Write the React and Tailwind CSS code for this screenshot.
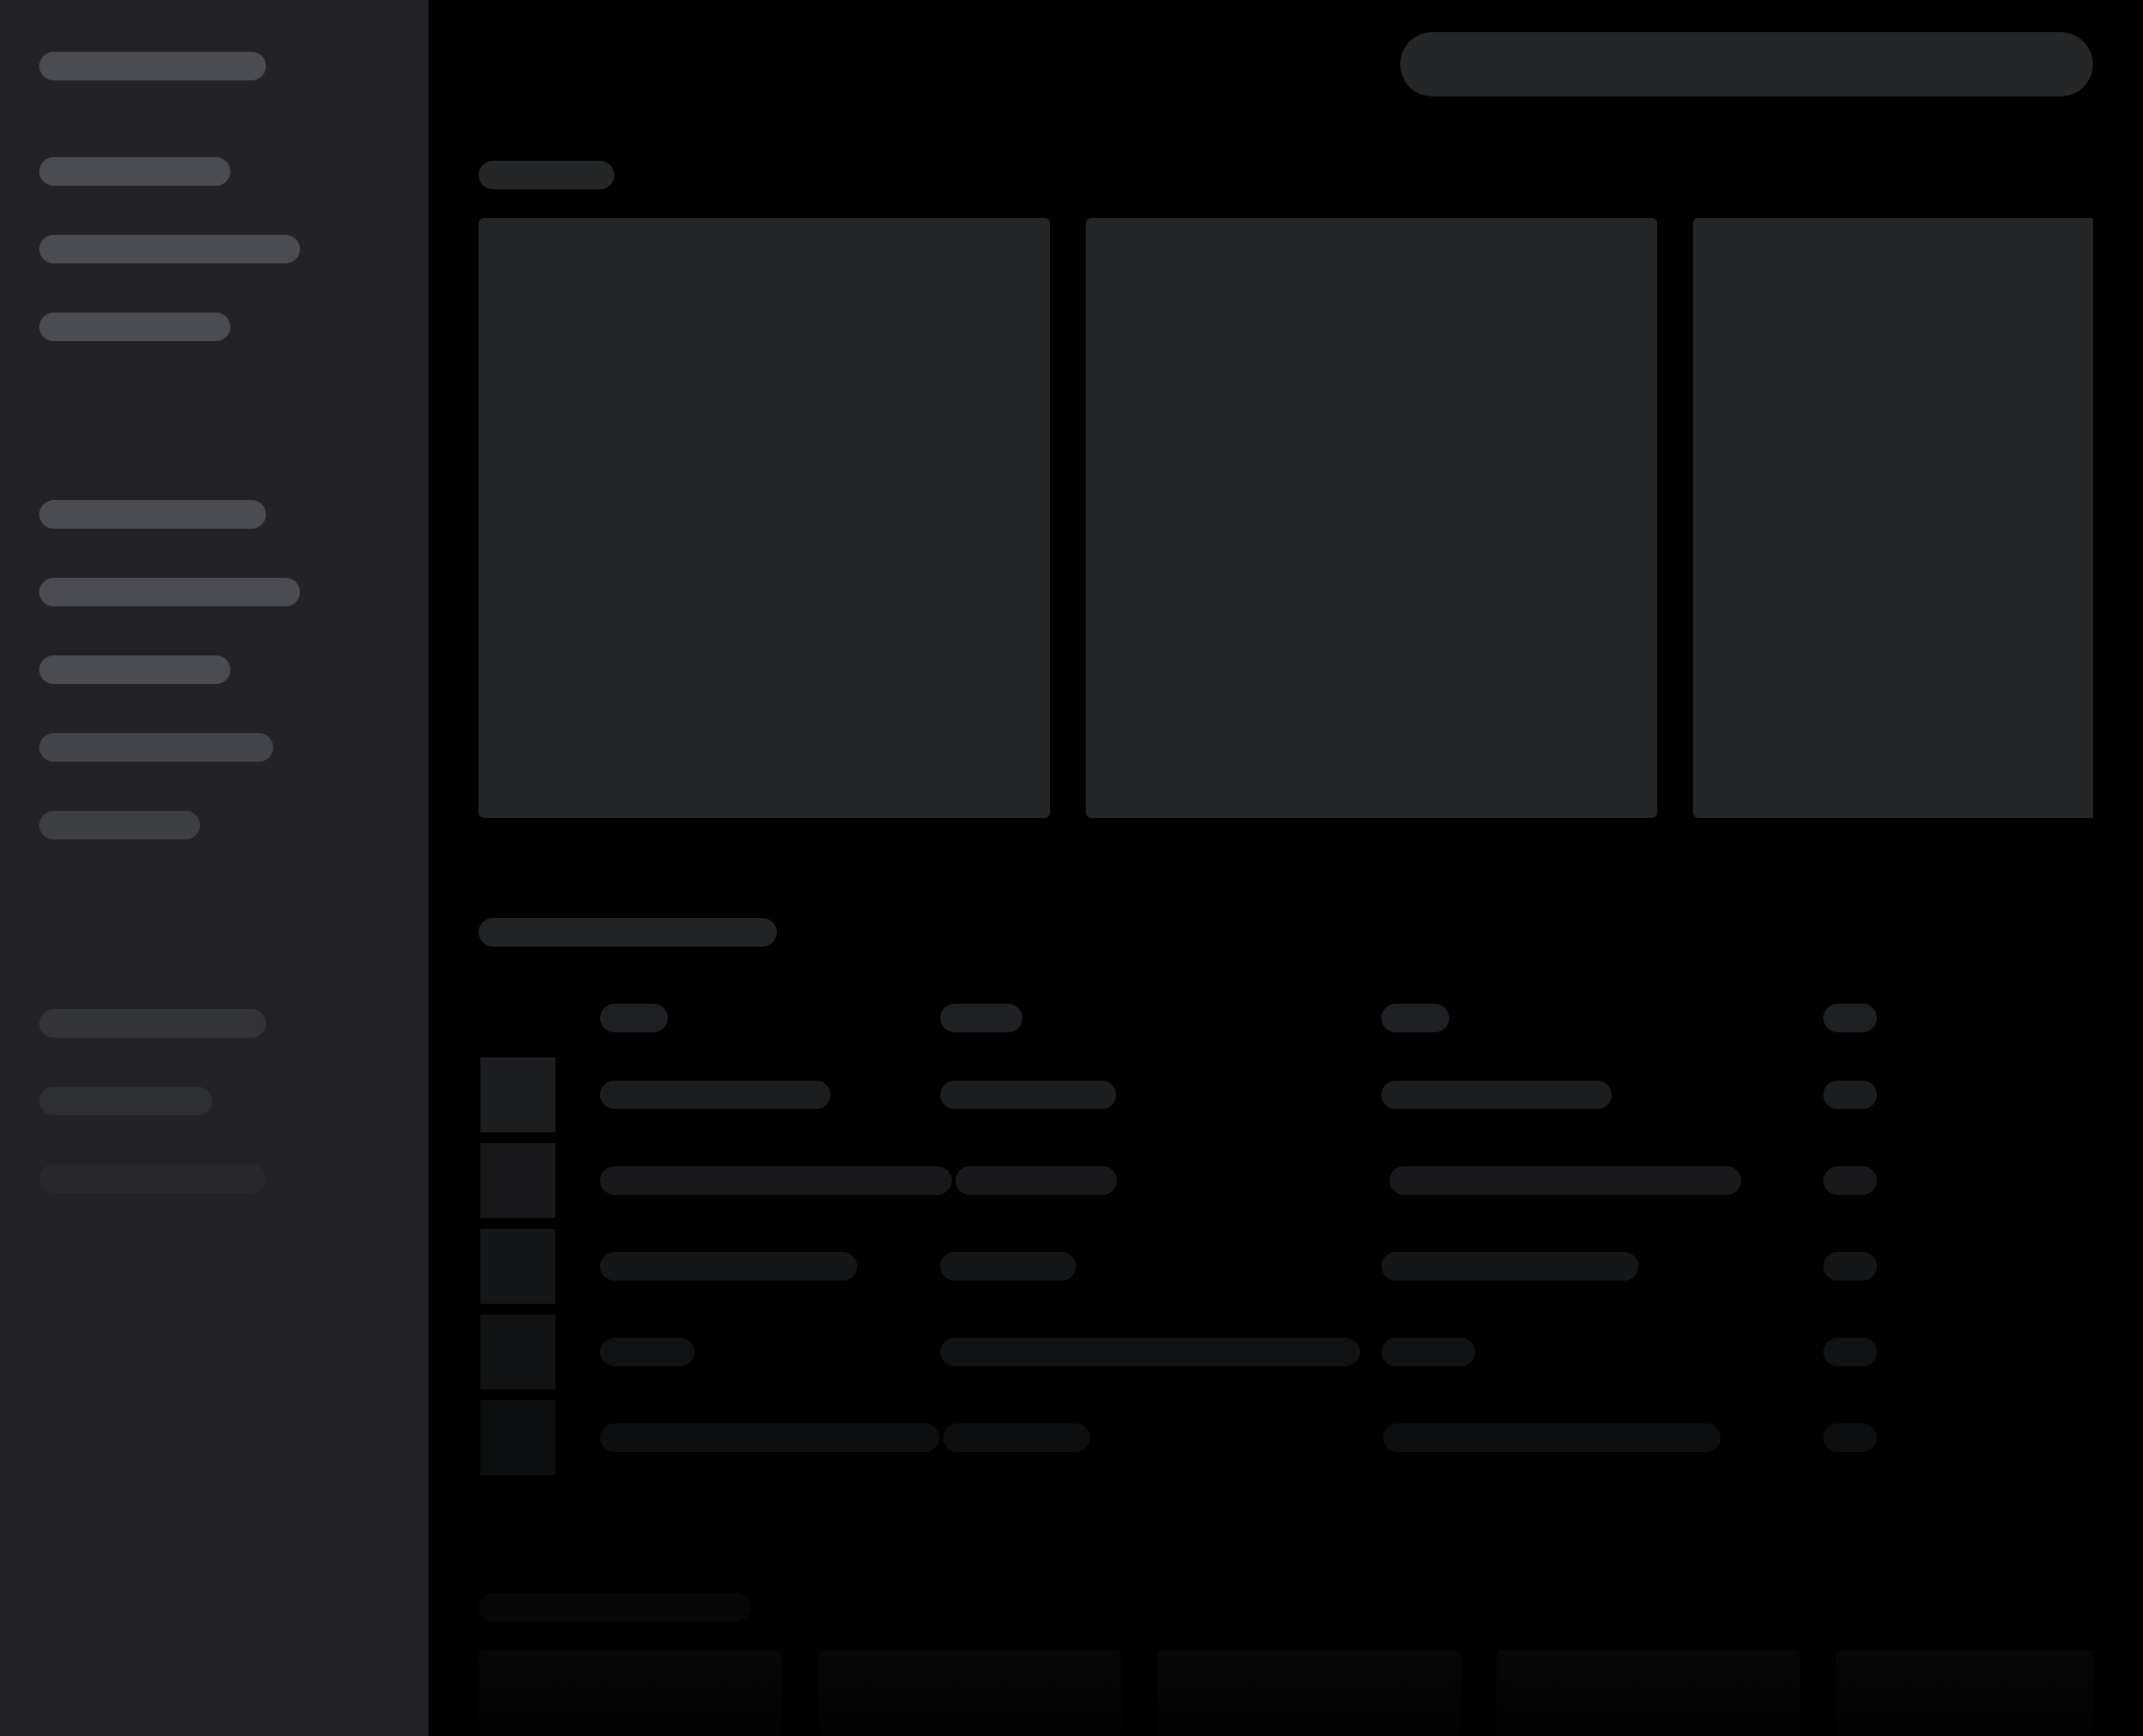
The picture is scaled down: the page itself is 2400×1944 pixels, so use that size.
import React from "react";

const Bar = ({ w, c }) => (
  <div className={`h-8 shrink-0 rounded-full ${w} ${c}`} />
);

const tableRows = [
  { thumb: "bg-[#1c1d1f]", bar: "bg-[#1c1d1f]", c1: "w-[258px]", c2: "w-[197px]", c3: "w-[258px]" },
  { thumb: "bg-[#19191b]", bar: "bg-[#19191b]", c1: "w-[394px]", c2: "w-[181px]", c3: "w-[394px]" },
  { thumb: "bg-[#151618]", bar: "bg-[#151618]", c1: "w-[288px]", c2: "w-[152px]", c3: "w-[288px]" },
  { thumb: "bg-[#111213]", bar: "bg-[#111213]", c1: "w-[106px]", c2: "w-[470px]", c3: "w-[105px]" },
  { thumb: "bg-[#0d0e0f]", bar: "bg-[#0d0e0f]", c1: "w-[380px]", c2: "w-[165px]", c3: "w-[378px]" },
];

export default function App() {
  return (
    <div className="flex h-[1944px] w-full overflow-hidden bg-black">
      {/* Sidebar */}
      <aside className="flex h-full w-[480px] shrink-0 flex-col bg-[#232327] px-[44px] pt-[58px]">
        <Bar w="w-[254px]" c="bg-[#4b4c51]" />
        <div className="mt-[86px] flex shrink-0 flex-col gap-[55px]">
          <Bar w="w-[214px]" c="bg-[#4b4c51]" />
          <Bar w="w-[292px]" c="bg-[#4b4c51]" />
          <Bar w="w-[214px]" c="bg-[#4b4c51]" />
        </div>
        <div className="mt-[178px] flex shrink-0 flex-col gap-[55px]">
          <Bar w="w-[254px]" c="bg-[#4b4c51]" />
          <Bar w="w-[292px]" c="bg-[#4b4c51]" />
          <Bar w="w-[214px]" c="bg-[#4b4c51]" />
          <Bar w="w-[262px]" c="bg-[#44454a]" />
          <Bar w="w-[180px]" c="bg-[#3e3f43]" />
        </div>
        <div className="mt-[190px] flex shrink-0 flex-col gap-[55px]">
          <Bar w="w-[254px]" c="bg-[#333438]" />
          <Bar w="w-[194px]" c="bg-[#2e2f33]" />
          <Bar w="w-[254px]" c="bg-[#29292d]" />
        </div>
      </aside>

      {/* Main */}
      <main className="flex min-w-0 flex-1 flex-col overflow-hidden px-[56px] pt-[36px]">
        <div className="flex shrink-0 justify-end">
          <div className="h-[72px] w-[776px] rounded-full bg-[#252628]" />
        </div>

        <div className="mt-[72px] h-8 w-[152px] shrink-0 rounded-full bg-[#252628]" />
        <div className="mt-8 flex shrink-0 gap-10 overflow-hidden">
          <div className="h-[672px] w-[640px] shrink-0 rounded-md bg-[#252628]" />
          <div className="h-[672px] w-[640px] shrink-0 rounded-md bg-[#252628]" />
          <div className="h-[672px] w-[640px] shrink-0 rounded-md bg-[#252628]" />
        </div>

        <div className="mt-[112px] h-8 w-[334px] shrink-0 rounded-full bg-[#222325]" />

        <div className="mt-16 flex shrink-0 flex-col">
          <div className="grid h-8 grid-cols-[136px_2fr_2.6fr_2.6fr_302px] items-center">
            <div />
            <div className="pr-1"><div className="h-8 w-[76px] rounded-full bg-[#1f2023]" /></div>
            <div className="pr-1"><div className="h-8 w-[92px] rounded-full bg-[#1f2023]" /></div>
            <div className="pr-1"><div className="h-8 w-[76px] rounded-full bg-[#1f2023]" /></div>
            <div><div className="h-8 w-[60px] rounded-full bg-[#1f2023]" /></div>
          </div>
          <div className="mt-[28px] flex flex-col gap-3">
            {tableRows.map((r, i) => (
              <div key={i} className="grid h-[84px] grid-cols-[136px_2fr_2.6fr_2.6fr_302px] items-center">
                <div className="pl-[2px]"><div className={`h-[84px] w-[84px] ${r.thumb}`} /></div>
                <div className="pr-1"><div className={`h-8 rounded-full ${r.c1} ${r.bar}`} /></div>
                <div className="pr-1"><div className={`h-8 rounded-full ${r.c2} ${r.bar}`} /></div>
                <div className="pr-1"><div className={`h-8 rounded-full ${r.c3} ${r.bar}`} /></div>
                <div><div className={`h-8 w-[60px] rounded-full ${r.bar}`} /></div>
              </div>
            ))}
          </div>
        </div>

        <div className="mt-[132px] h-8 w-[304px] shrink-0 rounded-full bg-[#070707]" />
        <div className="mt-8 flex shrink-0 gap-10 overflow-hidden">
          {[0, 1, 2, 3, 4].map((i) => (
            <div
              key={i}
              className="h-[110px] w-[340px] shrink-0 rounded-md bg-linear-to-b from-[#070707] via-[#040404] to-[#010101]"
            />
          ))}
        </div>
      </main>
    </div>
  );
}
